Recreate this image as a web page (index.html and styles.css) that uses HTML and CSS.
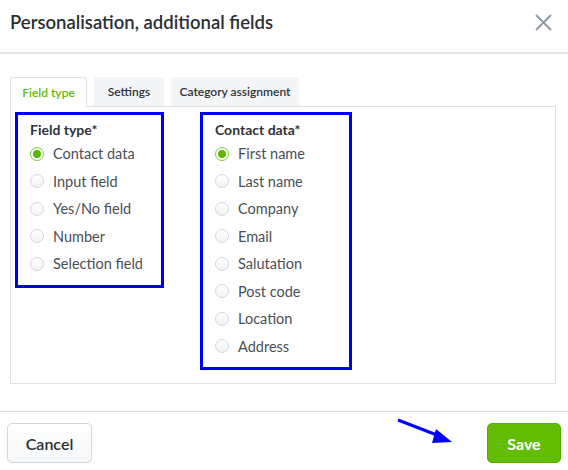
FILE: index.html
```html
<!DOCTYPE html>
<html lang="en">
<head>
  <meta charset="UTF-8">
  <meta name="viewport" content="width=device-width, initial-scale=1.0">
  <title>Personalisation, additional fields</title>
  <link rel="stylesheet" href="styles.css">
</head>
<body>
  <div class="modal">
    <!-- Header -->
    <div class="modal-header">
      <h2 class="modal-title">Personalisation, additional fields</h2>
      <span class="close">
        <svg width="17" height="17" viewBox="0 0 17 17"><path d="M1 1L16 16M16 1L1 16" stroke="#8e99a3" stroke-width="1.8" fill="none"/></svg>
      </span>
    </div>

    <!-- Body -->
    <div class="modal-body">
      <div class="tabs">
        <div class="tab active">Field type</div>
        <div class="tab tab-settings">Settings</div>
        <div class="tab tab-category">Category assignment</div>
      </div>

      <div class="panel">
        <div class="group group-type">
          <div class="group-title">Field type*</div>
          <label class="option"><span class="radio checked"></span>Contact data</label>
          <label class="option"><span class="radio"></span>Input field</label>
          <label class="option"><span class="radio"></span>Yes/No field</label>
          <label class="option"><span class="radio"></span>Number</label>
          <label class="option"><span class="radio"></span>Selection field</label>
        </div>

        <div class="group group-contact">
          <div class="group-title">Contact data*</div>
          <label class="option"><span class="radio checked"></span>First name</label>
          <label class="option"><span class="radio"></span>Last name</label>
          <label class="option"><span class="radio"></span>Company</label>
          <label class="option"><span class="radio"></span>Email</label>
          <label class="option"><span class="radio"></span>Salutation</label>
          <label class="option"><span class="radio"></span>Post code</label>
          <label class="option"><span class="radio"></span>Location</label>
          <label class="option"><span class="radio"></span>Address</label>
        </div>
      </div>
    </div>

    <!-- Footer -->
    <div class="modal-footer">
      <button class="btn btn-cancel">Cancel</button>
      <button class="btn btn-save">Save</button>
      <svg class="arrow" width="64" height="30" viewBox="0 0 64 30">
        <path d="M2 2L46 19" stroke="#0000ff" stroke-width="3" fill="none"/>
        <path d="M40 11L56 24L36 25Z" fill="#0000ff"/>
      </svg>
    </div>
  </div>
</body>
</html>
```

FILE: styles.css
```css
body {
  margin: 0;
  background-color: #ffffff;
  font-family: 'Lato', 'Noto Sans', sans-serif;
  color: #2f3338;
}

.modal {
  width: 568px;
  height: 470px;
  overflow: hidden;
}

.modal-header {
  height: 44px;
  padding: 0 16px 8px 10px;
  border-bottom: 2px solid #e2e7eb;
  display: flex;
  justify-content: space-between;
  align-items: center;
}

.modal-title {
  margin: 0;
  font-size: 18.5px;
  font-weight: 600;
  color: #2b2f33;
}

.close {
  display: flex;
}

.modal-body {
  padding: 23px 12px 0 10px;
}

.tabs {
  display: flex;
  gap: 7px;
}

.tab {
  height: 29px;
  box-sizing: border-box;
  display: flex;
  align-items: center;
  justify-content: center;
  font-size: 12px;
  font-weight: 600;
  color: #2f3338;
  background-color: #f3f5f7;
  border-radius: 3px 3px 0 0;
}

.tab.active {
  width: 77px;
  background-color: #ffffff;
  border: 1px solid #dde2e7;
  border-bottom: none;
  color: #5cb800;
  height: 30px;
  margin-bottom: -1px;
  position: relative;
}

.tab-settings {
  width: 70px;
}

.tab-category {
  width: 128px;
}

.panel {
  height: 278px;
  box-sizing: border-box;
  border: 1px solid #dde2e7;
  padding: 5px 0 0 4px;
  display: flex;
  align-items: flex-start;
  gap: 36px;
}

.group {
  border: 3px solid #0000f0;
  padding: 5px 0 7px 12px;
  display: flex;
  flex-direction: column;
}

.group-type {
  width: 131px;
}

.group-contact {
  width: 134px;
}

.group-title {
  font-size: 14px;
  font-weight: 700;
  color: #2f3338;
  height: 20px;
  line-height: 20px;
}

.option {
  display: flex;
  align-items: center;
  height: 27.5px;
  font-size: 14.5px;
  color: #4a4f55;
}

.radio {
  width: 14px;
  height: 14px;
  box-sizing: border-box;
  border: 1px solid #d3d8dd;
  border-radius: 50%;
  background: linear-gradient(#ffffff, #f1f3f5);
  margin-right: 9px;
  flex-shrink: 0;
  display: flex;
  align-items: center;
  justify-content: center;
}

.radio.checked {
  border-color: #7dc843;
  background: #ffffff;
}

.radio.checked::after {
  content: "";
  width: 8px;
  height: 8px;
  border-radius: 50%;
  background-color: #5cb800;
}

.modal-footer {
  margin-top: 27px;
  border-top: 1px solid #d5dbe0;
  padding: 11px 7px 0 7px;
  display: flex;
  justify-content: space-between;
  position: relative;
}

.btn {
  height: 40px;
  border-radius: 5px;
  font-family: 'Lato', 'Noto Sans', sans-serif;
  font-size: 16px;
  font-weight: 600;
  cursor: pointer;
}

.btn-cancel {
  width: 85px;
  background: linear-gradient(#ffffff, #f5f7f9);
  border: 1px solid #cfd5db;
  color: #2b2f33;
}

.btn-save {
  width: 74px;
  background-color: #62bd04;
  border: 1px solid #58ad00;
  color: #ffffff;
  font-weight: 700;
}

.arrow {
  position: absolute;
  left: 396px;
  top: 6px;
}
```
